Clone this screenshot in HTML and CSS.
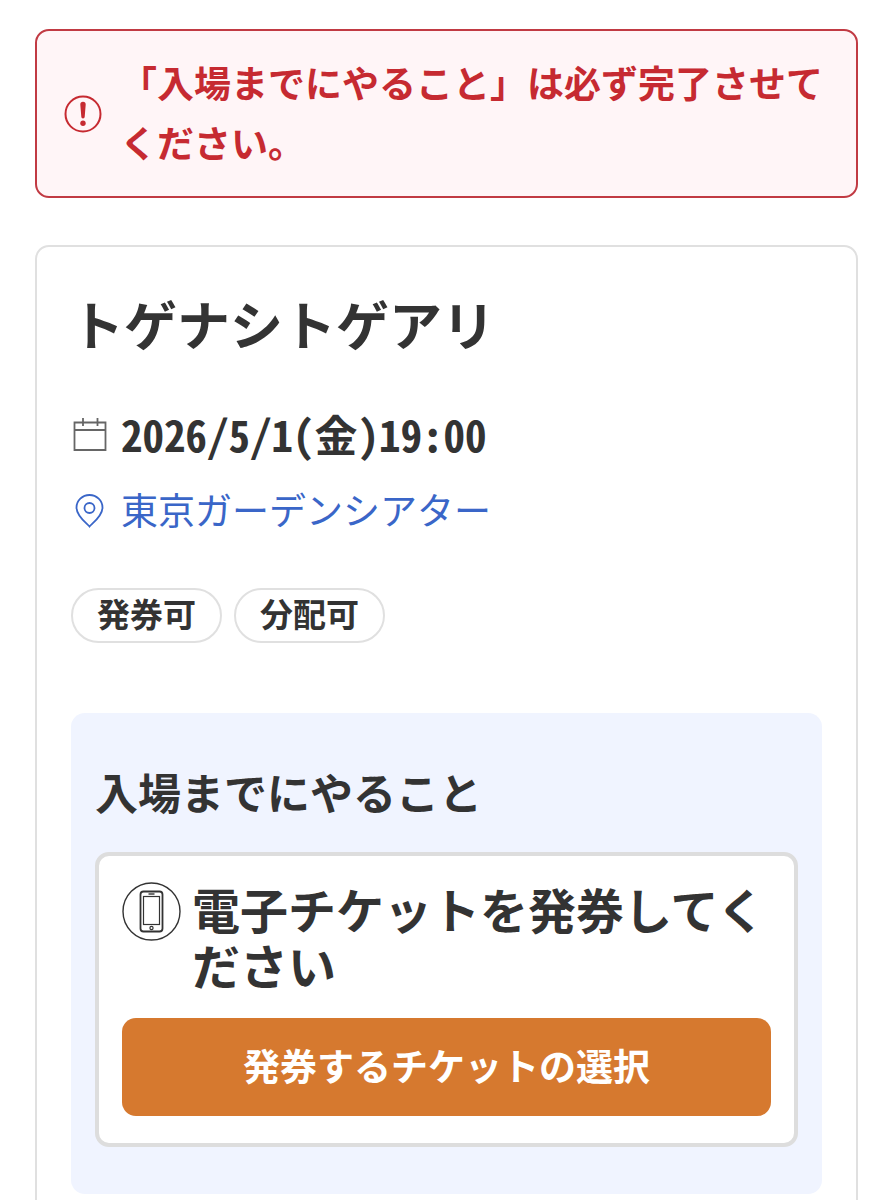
FILE: index.html
```html
<!DOCTYPE html>
<html lang="ja">
<head>
    <meta charset="UTF-8">
    <meta name="viewport" content="width=device-width, initial-scale=1.0">
    <title>トゲナシトゲアリ</title>
    <link rel="stylesheet" href="styles.css">
</head>
<body>
    <!-- 注意メッセージ -->
    <div class="alert" role="alert">
        <svg class="alert-icon" viewBox="0 0 38 38" aria-hidden="true">
            <circle cx="19" cy="19" r="17.5" fill="none" stroke="currentColor" stroke-width="2"/>
            <path d="M16.3 9.5a2.7 2.7 0 0 1 5.4 0l-1 12.3a1.7 1.7 0 0 1-3.4 0z" fill="currentColor"/>
            <circle cx="19" cy="28.3" r="2.7" fill="currentColor"/>
        </svg>
        <p class="alert-text">「入場までにやること」は必ず完了させてください。</p>
    </div>

    <!-- 公演情報 -->
    <main class="card">
        <h1 class="title">トゲナシトゲアリ</h1>

        <div class="info-row info-date">
            <svg class="info-icon" viewBox="0 0 38 38" fill="none" stroke="#666" stroke-width="1.8" aria-hidden="true">
                <path d="M3.500 6.500h31v27.500h-31zM3.500 14h31M12 2v8M26.500 2v8"/>
            </svg>
            <time class="date" datetime="2026-05-01T19:00">2026/5/1(金)19:00</time>
        </div>
        <div class="info-row">
            <svg class="info-icon pin" viewBox="0 0 38 38" fill="none" stroke="currentColor" stroke-width="1.8" aria-hidden="true">
                <path d="M18.500 34.500C16 31.500 5.500 24.500 5.500 15.500a13 12.500 0 0 1 26 0C31.500 24.500 21 31.500 18.500 34.500z"/>
                <circle cx="18.500" cy="16" r="5"/>
            </svg>
            <a class="venue" href="#">東京ガーデンシアター</a>
        </div>

        <ul class="tags">
            <li class="tag">発券可</li>
            <li class="tag">分配可</li>
        </ul>

        <!-- 入場までにやること -->
        <section class="todo">
            <h2 class="todo-title">入場までにやること</h2>
            <div class="task">
                <div class="task-head">
                    <svg class="task-icon" viewBox="0 0 60 60" fill="none" stroke="#333" aria-hidden="true">
                        <circle cx="29.500" cy="29.500" r="28.500" stroke-width="1.400"/>
                        <rect x="18.500" y="9.500" width="22" height="40" rx="3" stroke-width="1.800"/>
                        <rect x="21.500" y="14.500" width="16" height="28" stroke-width="1.200"/>
                        <path d="M26.500 12h6" stroke-width="1.400"/>
                        <circle cx="29.500" cy="46" r="1.600" stroke-width="1.200"/>
                    </svg>
                    <h3 class="task-title">電子チケットを発券してください</h3>
                </div>
                <button type="button" class="btn">発券するチケットの選択</button>
            </div>
        </section>
    </main>
</body>
</html>
```
FILE: styles.css
```css
* {
    box-sizing: border-box;
}
body {
    margin: 0;
    padding: 29px 35px;
    background: #fff;
    color: #333;
    font-family: "Noto Sans CJK JP", sans-serif;
    font-size: 37px;
}
h1, h2, h3, p, ul {
    margin: 0;
    padding: 0;
}
svg {
    flex: none;
}
.alert {
    display: flex;
    align-items: center;
    gap: 18px;
    padding: 21px 27px 24px;
    border: 2px solid #c13a43;
    border-radius: 14px;
    background: #fff5f7;
    color: #c62a31;
}
.alert-icon {
    width: 38px;
    height: 38px;
    margin-top: 4px;
}
.alert-text {
    font-weight: 700;
    line-height: 60px;
}
.card {
    margin-top: 47px;
    padding: 34px;
    border: 2px solid #e0e0e0;
    border-radius: 14px;
}
.title {
    font-size: 53px;
    font-weight: 700;
    line-height: 84px;
}
.info-row {
    display: flex;
    align-items: center;
    gap: 12px;
    line-height: 60px;
}
.info-date {
    margin: 38px 0 16px;
}
.info-icon {
    width: 38px;
    height: 38px;
    margin-top: 4px;
}
.pin {
    color: #3a66c8;
}
.date {
    font-size: 43px;
    font-weight: 700;
    font-feature-settings: "hwid";
}
.venue {
    color: #3a66c8;
    text-decoration: none;
}
.tags {
    display: flex;
    gap: 12px;
    margin-top: 49px;
    list-style: none;
}
.tag {
    padding: 0 24px 4px;
    border: 2px solid #e0e0e0;
    border-radius: 28px;
    font-size: 33px;
    font-weight: 700;
    line-height: 47px;
}
.todo {
    margin-top: 70px;
    padding: 43px 24px 47px;
    border-radius: 14px;
    background: #f0f4ff;
}
.todo-title {
    font-size: 43px;
    font-weight: 700;
    line-height: 70px;
}
.task {
    margin-top: 26px;
    padding: 24px 23px 27px;
    border: 4px solid #ddd;
    border-radius: 14px;
    background: #fff;
}
.task-head {
    display: flex;
    align-items: flex-start;
    gap: 10px;
}
.task-icon {
    width: 60px;
    height: 60px;
    margin-top: 2px;
}
.task-title {
    font-size: 48px;
    font-weight: 700;
    line-height: 56px;
}
.btn {
    display: block;
    width: 100%;
    margin-top: 26px;
    padding: 17px 19px 21px;
    border: none;
    border-radius: 14px;
    background: #d6792f;
    color: #fff;
    font-family: inherit;
    font-size: 37px;
    font-weight: 700;
    line-height: 60px;
    cursor: pointer;
}
```
